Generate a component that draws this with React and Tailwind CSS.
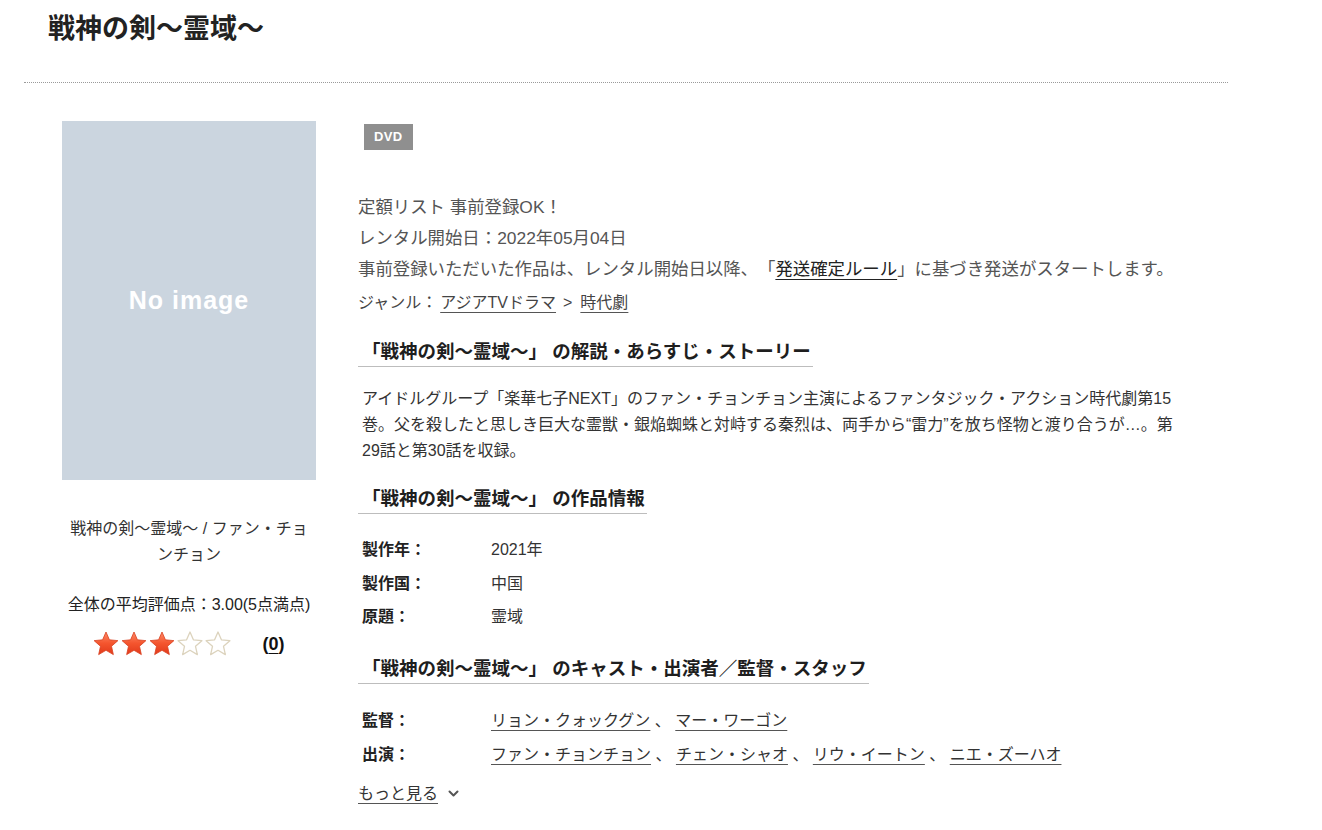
const STAR = "13,1 16.41,8.81 24.89,9.64 18.52,15.29 20.35,23.61 13,19.3 5.65,23.61 7.48,15.29 1.11,9.64 9.59,8.81";

const Star = ({ filled }) => (
  <svg width="26" height="26" viewBox="0 0 26 26">
    <defs>
      <linearGradient id="starFill" x1="0" y1="0" x2="0" y2="1">
        <stop offset="0" stopColor="#ff8a68" />
        <stop offset="0.5" stopColor="#f4552e" />
        <stop offset="1" stopColor="#e2391a" />
      </linearGradient>
    </defs>
    {filled ? (
      <polygon points={STAR} fill="url(#starFill)" stroke="#d8401f" strokeWidth="0.8" strokeLinejoin="round" />
    ) : (
      <polygon points={STAR} fill="#fff" stroke="#dcd3bd" strokeWidth="1.3" strokeLinejoin="round" />
    )}
  </svg>
);

const Heading = ({ children }) => (
  <h2 className="inline-block border-b border-[#bdbdbd] pl-[4px] pr-[2px] pb-[2px] text-[18.5px] font-bold leading-[24px] text-[#1e1e1e]">
    {children}
  </h2>
);

const Link = ({ children, className = "" }) => (
  <a href="#" className={`underline underline-offset-[4px] decoration-[#555] ${className}`}>
    {children}
  </a>
);

const InfoRow = ({ label, children }) => (
  <div className="flex px-[4px]">
    <div className="w-[129px] shrink-0 font-bold text-[#222]">{label}</div>
    <div className="text-[#333]">{children}</div>
  </div>
);

export default function App() {
  return (
    <div className="min-h-[830px] bg-white font-['Liberation_Sans','Noto_Sans_CJK_JP',sans-serif] text-[#333] [text-spacing-trim:space-all]">
      <div className="ml-[24px] w-[1204px]">
        <h1 className="border-b border-dotted border-[#9a9a9a] pl-[24px] pt-[11px] pb-[35px] text-[27px] font-bold leading-[36px] text-[#222]">
          戦神の剣〜霊域〜
        </h1>

        <div className="flex pt-[38px] pl-[38px]">
          {/* left column */}
          <div className="w-[254px] shrink-0">
            <div className="flex h-[359px] items-center justify-center bg-[#cbd5df]">
              <span className="text-[25px] font-bold tracking-[0.04em] text-white">No image</span>
            </div>
            <p className="mt-[36px] px-[6px] text-center text-[16px] leading-[26px] text-[#333]">
              戦神の剣〜霊域〜 / ファン・チョンチョン
            </p>
            <p className="mt-[24px] text-center text-[16px] leading-[26px] text-[#222]">
              全体の平均評価点：3.00(5点満点)
            </p>
            <div className="mt-[13px] flex h-[26px] items-center justify-center">
              <div className="flex gap-[2px]">
                <Star filled />
                <Star filled />
                <Star filled />
                <Star />
                <Star />
              </div>
              <span className="ml-[31px] text-[18px] font-bold text-[#111]">
                (<span className="underline underline-offset-[3px]">0</span>)
              </span>
            </div>
          </div>

          {/* right column */}
          <div className="ml-[42px] w-[836px]">
            <span className="mt-[3px] ml-[6px] inline-block bg-[#8f8f8f] px-[10px] text-[13px] font-bold leading-[26px] tracking-[0.03em] text-white">
              DVD
            </span>

            <div className="mt-[42px] text-[17.4px] leading-[31px] text-[#555]">
              <p>定額リスト 事前登録OK！</p>
              <p>レンタル開始日：2022年05月04日</p>
              <p>
                事前登録いただいた作品は、レンタル開始日以降、「
                <a href="#" className="text-[#222] underline underline-offset-[4px]">発送確定ルール</a>
                」に基づき発送がスタートします。
              </p>
            </div>
            <p className="mt-[5px] text-[16px] leading-[26px] text-[#444]">
              ジャンル：<Link className="ml-[3px]">アジアTVドラマ</Link>
              <span className="ml-[7px] mr-[8px]">&gt;</span>
              <Link>時代劇</Link>
            </p>

            <div className="mt-[24px]">
              <Heading>「戦神の剣〜霊域〜」 の解説・あらすじ・ストーリー</Heading>
            </div>
            <p className="mt-[19px] px-[4px] text-[16px] leading-[26px] text-[#333]">
              アイドルグループ「楽華七子NEXT」のファン・チョンチョン主演によるファンタジック・アクション時代劇第15巻。父を殺したと思しき巨大な霊獣・銀焔蜘蛛と対峙する秦烈は、両手から“雷力”を放ち怪物と渡り合うが…。第29話と第30話を収録。
            </p>

            <div className="mt-[23px]">
              <Heading>「戦神の剣〜霊域〜」 の作品情報</Heading>
            </div>
            <div className="mt-[19px] text-[16px] leading-[33.5px]">
              <InfoRow label="製作年：">2021年</InfoRow>
              <InfoRow label="製作国：">中国</InfoRow>
              <InfoRow label="原題：">霊域</InfoRow>
            </div>

            <div className="mt-[23px]">
              <Heading>「戦神の剣〜霊域〜」 のキャスト・出演者／監督・スタッフ</Heading>
            </div>
            <div className="mt-[20px] text-[16px] leading-[34px]">
              <InfoRow label="監督：">
                <Link>リョン・クォックグン</Link> 、 <Link>マー・ワーゴン</Link>
              </InfoRow>
              <InfoRow label="出演：">
                <Link>ファン・チョンチョン</Link> 、 <Link>チェン・シャオ</Link> 、 <Link>リウ・イートン</Link> 、{" "}
                <Link>ニエ・ズーハオ</Link>
              </InfoRow>
            </div>
            <div className="mt-[9px] flex items-center text-[16px] leading-[26px] text-[#333]">
              <Link>もっと見る</Link>
              <svg className="ml-[10px]" width="11" height="8" viewBox="0 0 11 8">
                <path d="M1.5 1.5l4 4 4-4" fill="none" stroke="#555" strokeWidth="2" strokeLinecap="round" strokeLinejoin="round" />
              </svg>
            </div>
          </div>
        </div>
      </div>
    </div>
  );
}
